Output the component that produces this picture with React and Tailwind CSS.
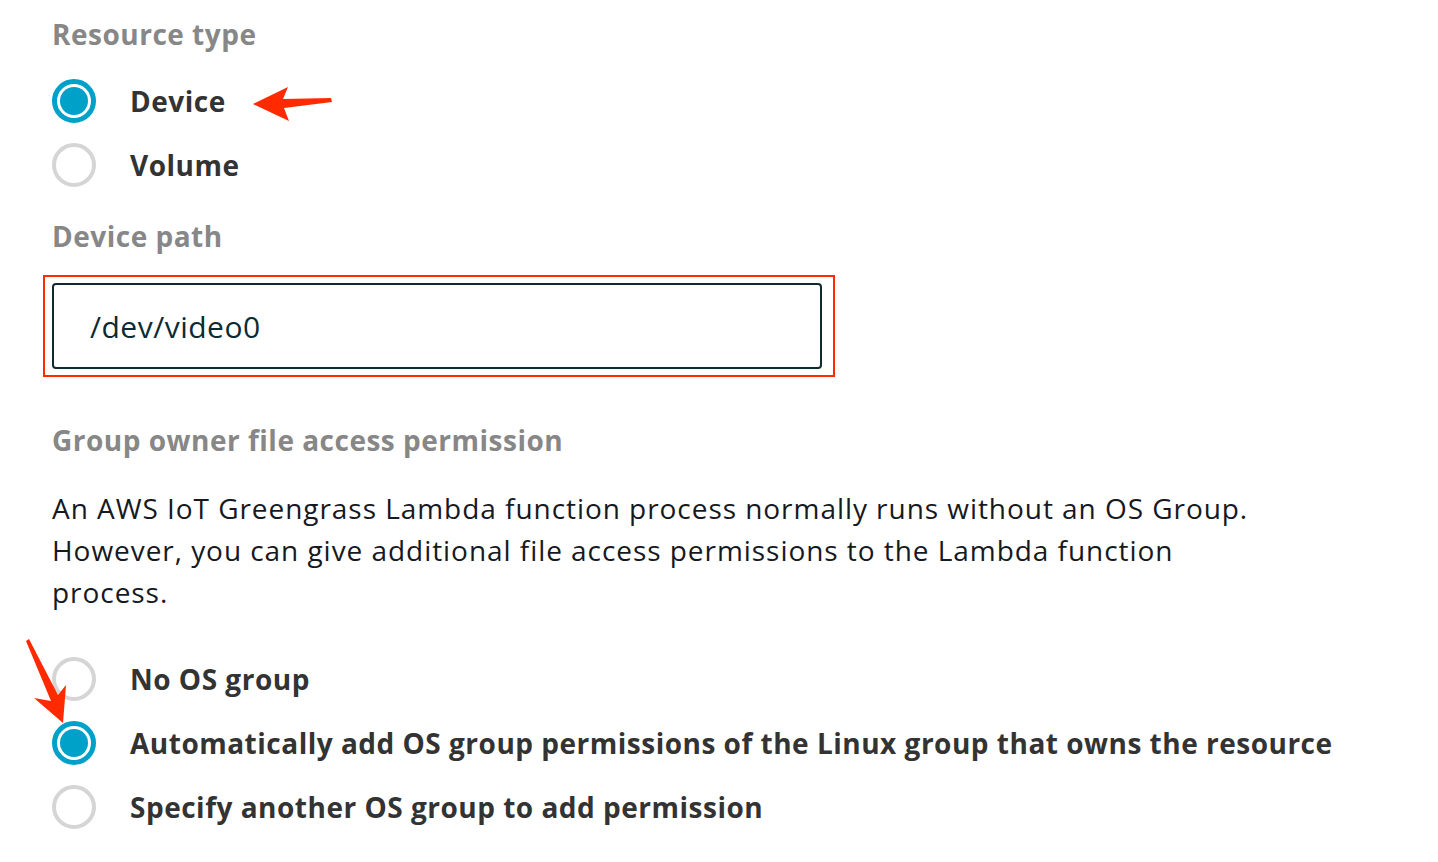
import React from "react";

function Radio({ checked, label }) {
  return (
    <div className="flex h-[64px] items-center">
      {checked ? (
        <span className="flex h-[44px] w-[44px] shrink-0 items-center justify-center rounded-full border-[5px] border-[#00a1c9] bg-white">
          <span className="h-[28px] w-[28px] rounded-full bg-[#00a1c9]" />
        </span>
      ) : (
        <span className="h-[44px] w-[44px] shrink-0 rounded-full border-[4px] border-[#d5d5d5] bg-white" />
      )}
      <span className="ml-[34px] whitespace-nowrap text-[28px] font-bold leading-[42px] tracking-[0.5px] text-[#333333]">
        {label}
      </span>
    </div>
  );
}

export default function App() {
  return (
    <div className="relative min-h-[862px] w-[1438px] overflow-hidden bg-white pl-[52px] pt-[13px] font-['Open_Sans',sans-serif]">
      <div className="text-[28px] font-bold leading-[42px] tracking-[0.5px] text-[#878787]">Resource type</div>
      <div className="mt-[14px]">
        <Radio checked label="Device" />
        <Radio label="Volume" />
      </div>
      <div className="mt-[18px] text-[28px] font-bold leading-[42px] tracking-[0.5px] text-[#878787]">Device path</div>

      {/* highlighted input */}
      <div className="-ml-[9px] mt-[18px] w-[792px] border-2 border-[#ff2a00] px-[7px] py-[6px]">
        <div className="flex h-[86px] w-[770px] items-center rounded-[4px] border-2 border-[#0f2a35] pl-[36px] text-[30px] tracking-[0.5px] text-[#0b2a33]">
          /dev/video0
        </div>
      </div>

      <div className="mt-[42px] text-[28px] font-bold leading-[42px] tracking-[0.5px] text-[#878787]">
        Group owner file access permission
      </div>
      <p className="mt-[26px] w-[1215px] text-[28px] leading-[42px] tracking-[0.95px] text-[#16191f]">
        An AWS IoT Greengrass Lambda function process normally runs without an OS Group. However, you can give additional file access permissions to the Lambda function process.
      </p>
      <div className="mt-[34px]">
        <Radio label="No OS group" />
        <Radio checked label="Automatically add OS group permissions of the Linux group that owns the resource" />
        <Radio label="Specify another OS group to add permission" />
      </div>

      {/* annotation arrows */}
      <svg className="absolute left-0 top-0" width="1438" height="862" viewBox="0 0 1438 862">
        <polygon points="253,104 288,87 283,99 331,98 332,102 284,108 289,121" fill="#ff2a00" />
        <polygon points="63,723 34,698 51,701 26,641 29,639 58,695 66,685" fill="#ff2a00" />
      </svg>
    </div>
  );
}
